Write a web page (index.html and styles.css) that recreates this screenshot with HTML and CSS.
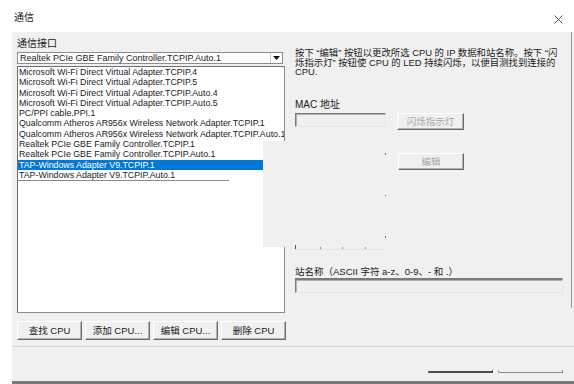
FILE: index.html
```html
<!DOCTYPE html>
<html lang="zh">
<head>
    <meta charset="UTF-8">
    <title>通信</title>
    <link rel="stylesheet" href="styles.css">
</head>
<body>
    <div class="dialog">
        <!-- Title bar -->
        <div class="titlebar">
            <span class="title">通信</span>
            <svg class="close" width="9" height="9" viewBox="0 0 9 9">
                <path d="M0.5 0.5 L8.5 8.5 M8.5 0.5 L0.5 8.5" stroke="#555" stroke-width="1" fill="none"/>
            </svg>
        </div>

        <div class="frame">
            <div class="content">
                <!-- Interface list -->
                <div class="left">
                    <div class="label">通信接口</div>
                    <div class="combo">
                        <span class="combo-text">Realtek PCIe GBE Family Controller.TCPIP.Auto.1</span>
                        <span class="combo-btn">
                            <svg width="7" height="4" viewBox="0 0 7 4"><path d="M0 0 H7 L3.5 4 Z" fill="#111"/></svg>
                        </span>
                    </div>
                    <div class="listbox">
                        <div class="item">Microsoft Wi-Fi Direct Virtual Adapter.TCPIP.4</div>
                        <div class="item">Microsoft Wi-Fi Direct Virtual Adapter.TCPIP.5</div>
                        <div class="item">Microsoft Wi-Fi Direct Virtual Adapter.TCPIP.Auto.4</div>
                        <div class="item">Microsoft Wi-Fi Direct Virtual Adapter.TCPIP.Auto.5</div>
                        <div class="item">PC/PPI cable.PPI.1</div>
                        <div class="item">Qualcomm Atheros AR956x Wireless Network Adapter.TCPIP.1</div>
                        <div class="item">Qualcomm Atheros AR956x Wireless Network Adapter.TCPIP.Auto.1</div>
                        <div class="item">Realtek PCIe GBE Family Controller.TCPIP.1</div>
                        <div class="item">Realtek PCIe GBE Family Controller.TCPIP.Auto.1</div>
                        <div class="item selected">TAP-Windows Adapter V9.TCPIP.1</div>
                        <div class="item">TAP-Windows Adapter V9.TCPIP.Auto.1</div>
                        <div class="list-end"></div>
                    </div>
                    <div class="buttons">
                        <div class="btn">查找 CPU</div>
                        <div class="btn">添加 CPU...</div>
                        <div class="btn">编辑 CPU...</div>
                        <div class="btn">删除 CPU</div>
                    </div>
                </div>

                <!-- CPU details -->
                <div class="right">
                    <div class="info">按下 “编辑” 按钮以更改所选 CPU 的 IP 数据和站名称。按下 “闪<br>烁指示灯” 按钮使 CPU 的 LED 持续闪烁，以便目测找到连接的<br>CPU.</div>
                    <div class="field-label mac-label">MAC 地址</div>
                    <div class="mac-row">
                        <div class="field mac-field"></div>
                        <div class="btn disabled flash-btn">闪烁指示灯</div>
                    </div>
                    <div class="edit-row">
                        <div class="ip-ghost">
                            <span class="dot"></span>
                            <span class="dot gap"></span>
                            <span class="dot gap"></span>
                            <div class="ip-row">
                                <span class="bar"></span>
                                <span class="dot d1"></span>
                                <span class="dot d2"></span>
                                <span class="dot d3"></span>
                            </div>
                        </div>
                        <div class="btn disabled edit-btn">编辑</div>
                    </div>
                    <div class="field-label station-label">站名称（ASCII 字符 a-z、0-9、- 和 .）</div>
                    <div class="field station-field"></div>
                </div>

                <!-- leftover window piece lying over the list -->
                <div class="ghost"></div>
            </div>

            <div class="footer">
                <span class="edge dark"></span>
                <span class="edge"></span>
            </div>
        </div>
    </div>
</body>
</html>
```

FILE: styles.css
```css
/* General Reset */
* {
    margin: 0;
    padding: 0;
    box-sizing: border-box;
}

body {
    font-family: "Liberation Sans", "Noto Sans CJK SC", sans-serif;
    background-color: #fff;
    color: #1a1a1a;
    width: 574px;
    height: 384px;
    overflow: hidden;
}

.dialog {
    width: 574px;
    height: 384px;
}

/* Title bar */
.titlebar {
    height: 32px;
    display: flex;
    justify-content: space-between;
    align-items: flex-start;
    padding: 12px 11px 0 14px;
}

.title {
    font-size: 10px;
    line-height: 12px;
}

.close {
    margin-top: 3px;
}

/* Grey client area */
.frame {
    margin-left: 12px;
    height: 352px;
    background-color: #f0f0f0;
    border-bottom: 3px solid #7a7a7a;
    display: flex;
    flex-direction: column;
}

.content {
    position: relative;
    display: flex;
    height: 314px;
}

.left {
    width: 275px;
    padding: 5px 0 0 5px;
}

.label {
    font-size: 10px;
    line-height: 13px;
    margin-bottom: 2px;
}

.combo {
    width: 266px;
    height: 12px;
    background-color: #fff;
    border: 1px solid #8c8c8c;
    display: flex;
    align-items: center;
    margin-bottom: 2px;
}

.combo-text {
    flex: 1;
    font-size: 9px;
    line-height: 10px;
    padding-left: 2px;
    white-space: nowrap;
}

.combo-btn {
    width: 12px;
    height: 10px;
    border-left: 1px solid #d0d0d0;
    display: flex;
    align-items: center;
    justify-content: center;
}

.listbox {
    width: 268px;
    height: 247px;
    background-color: #fff;
    border: 1px solid #8c8c8c;
    border-top-color: #6e6e6e;
    border-left-color: #6e6e6e;
    overflow: hidden;
}

.item {
    font-size: 8.8px;
    height: 10.3px;
    line-height: 10.3px;
    padding-left: 1px;
    white-space: nowrap;
}

.item.selected {
    width: 245px;
    background-color: #0078d7;
    color: #fff;
}

.list-end {
    width: 211px;
    height: 1px;
    background-color: #8a8a8a;
}

/* Buttons */
.buttons {
    display: flex;
    gap: 3px;
    margin-top: 8px;
}

.btn {
    width: 65px;
    height: 19px;
    font-size: 9.5px;
    line-height: 17px;
    text-align: center;
    white-space: nowrap;
    background-color: #f0f0f0;
    border: 1px solid;
    border-color: #fff #6a6a6a #6a6a6a #fff;
    box-shadow: inset -1px -1px 0 #b4b4b4;
}

.btn.disabled {
    color: #a6a6a6;
}

/* Right column */
.right {
    margin-left: 8px;
    width: 277px;
    height: 276px;
    padding-right: 7px;
    border-right: 1px solid #9a9a9a;
    display: flex;
    flex-direction: column;
}

.info {
    margin-top: 16px;
    height: 29px;
    font-size: 9.4px;
    line-height: 9.5px;
    white-space: nowrap;
}

.field-label {
    font-size: 10px;
    line-height: 12px;
    white-space: nowrap;
}

.mac-label {
    margin-top: 22px;
}

.mac-row {
    display: flex;
    align-items: flex-start;
    margin-top: 2px;
}

.field {
    background-color: #f0f0f0;
    border: 1px solid;
    border-color: #7a7a7a #e6e6e6 #e6e6e6 #7a7a7a;
    box-shadow: inset 1px 1px 0 #b0b0b0;
}

.mac-field {
    width: 91px;
    height: 14px;
}

.flash-btn {
    width: 67px;
    height: 17px;
    line-height: 15px;
    margin-left: 11px;
}

.edit-row {
    display: flex;
    align-items: flex-start;
    margin-top: 23px;
}

.ip-ghost {
    width: 91px;
    height: 97px;
    display: flex;
    flex-direction: column;
}

.dot {
    display: block;
    width: 1px;
    height: 2px;
    background-color: #777;
    align-self: flex-end;
}

.dot.gap {
    margin-top: 40px;
}

.ip-row {
    display: flex;
    align-items: flex-end;
    height: 4px;
    margin-top: 8px;
    border-bottom: 1px solid #e4e4e4;
}

.ip-row .dot {
    align-self: auto;
    background-color: #999;
}

.bar {
    width: 1px;
    height: 4px;
    background-color: #555;
}

.d1 { margin-left: 24px; }
.d2 { margin-left: 21px; }
.d3 { margin-left: 22px; }

.edit-btn {
    width: 66px;
    height: 17px;
    line-height: 15px;
    margin-left: 12px;
}

.station-label {
    margin-top: 16px;
    font-size: 9.5px;
}

.station-field {
    width: 268px;
    height: 15px;
    border-top-width: 2px;
}

/* piece of another window covering the list */
.ghost {
    position: absolute;
    left: 251px;
    top: 109px;
    width: 29px;
    height: 106px;
    background-color: #f0f0f0;
}

/* Bottom strip */
.footer {
    height: 35px;
    border-top: 1px solid #d6d6d6;
    display: flex;
    justify-content: flex-end;
    align-items: flex-end;
    gap: 5px;
    padding: 0 11px 8px 0;
}

.edge {
    width: 65px;
    height: 3px;
    border-bottom: 1px solid #8a8a8a;
    border-right: 1px solid #8a8a8a;
    border-left: 1px solid #b0b0b0;
}

.edge.dark {
    border-bottom: 2px solid #4c4c4c;
    border-right-color: #4c4c4c;
}
```
